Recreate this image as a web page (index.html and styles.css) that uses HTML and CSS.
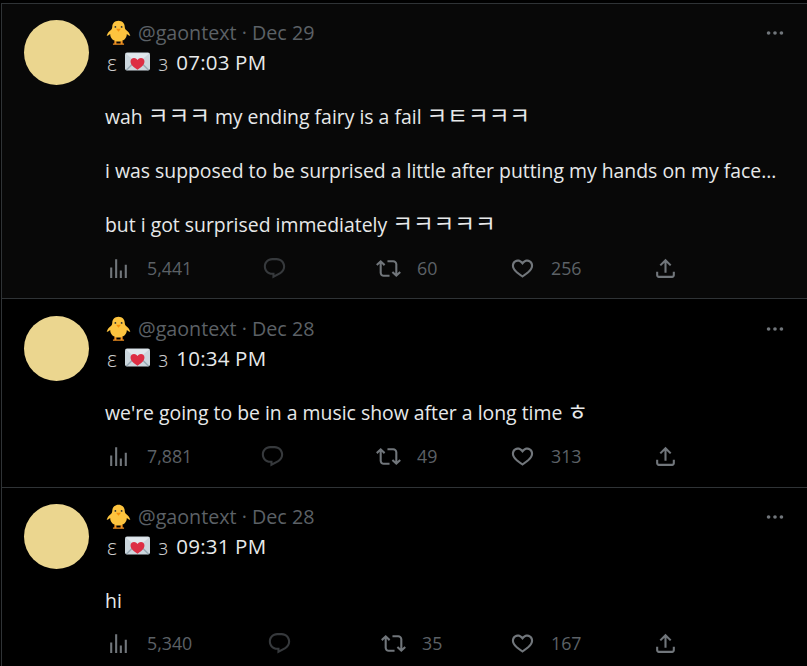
FILE: index.html
```html
<!DOCTYPE html>
<html lang="en">

<head>
    <meta charset="UTF-8">
    <meta name="viewport" content="width=device-width, initial-scale=1.0">
    <title>@gaontext</title>
    <link rel="stylesheet" href="styles.css">
</head>

<body>

    <svg class="sprites" width="0" height="0">
        <symbol id="chick" viewBox="0 0 36 36">
            <path fill="#f19020" d="M12 30h3v4h3v1.500h-8V34h2zM21 30h3v4h2v1.500h-8V34h3z"/>
            <path fill="#fdc43f" d="M18 1c5.500 0 9 4 9 9 0 1.500.5 3 1.500 4 3 2 5.500 5 6.500 9-2-.5-3.500-1.500-5-3 0 6-5 11-12 11S6 26 6 20c-1.500 1.500-3 2.500-5 3 1-4 3.500-7 6.500-9 1-1 1.500-2.500 1.500-4 0-5 3.500-9 9-9z"/>
            <path fill="#f4900c" d="M14.500 12.500h7L18 17z"/>
            <circle fill="#292f33" cx="13.500" cy="10" r="1.300"/>
            <circle fill="#292f33" cx="22.500" cy="10" r="1.300"/>
        </symbol>
        <symbol id="letter" viewBox="0 0 36 36">
            <rect fill="#ccd6dd" x="0" y="5" width="36" height="26" rx="3"/>
            <path fill="#99aab5" d="M1 30l13-13 1.500 1.500L3 31zM35 30L22 17l-1.500 1.500L33 31z"/>
            <path fill="#e1e8ed" d="M1 6l17 15L35 6z"/>
            <path fill="#dd2e44" d="M18 30c-7-5-10-8-10-12 0-3 2-5 5-5 2 0 4 1 5 3 1-2 3-3 5-3 3 0 5 2 5 5 0 4-3 7-10 12z"/>
        </symbol>
        <symbol id="views" viewBox="0 0 24 24">
            <path d="M8.750 21V3h2v18h-2zM18 21V8.500h2V21h-2zM4 21l.004-10h2L6 21H4zm9.248 0v-7h2v7h-2z"/>
        </symbol>
        <symbol id="reply" viewBox="0 0 24 24">
            <path d="M1.751 10c0-4.420 3.584-8 8.005-8h4.366c4.490 0 8.129 3.640 8.129 8.130 0 2.960-1.607 5.680-4.196 7.110l-8.054 4.460v-3.690h-.067c-4.490.100-8.183-3.510-8.183-8.010zm8.005-6c-3.317 0-6.005 2.690-6.005 6 0 3.370 2.770 6.080 6.138 6.010l.351-.010h1.761v2.300l5.087-2.810c1.951-1.080 3.163-3.130 3.163-5.360 0-3.390-2.744-6.130-6.129-6.130H9.756z"/>
        </symbol>
        <symbol id="retweet" viewBox="0 0 24 24">
            <path d="M4.500 3.880l4.432 4.140-1.364 1.460L5.500 7.550V16c0 1.100.896 2 2 2H13v2H7.500c-2.209 0-4-1.790-4-4V7.550L1.432 9.480.068 8.020 4.500 3.880zM16.500 6H11V4h5.500c2.209 0 4 1.790 4 4v8.450l2.068-1.930 1.364 1.460-4.432 4.140-4.432-4.140 1.364-1.460 2.068 1.930V8c0-1.100-.896-2-2-2z"/>
        </symbol>
        <symbol id="like" viewBox="0 0 24 24">
            <path d="M16.697 5.500c-1.222-.060-2.679.510-3.890 2.160l-.805 1.090-.806-1.090C9.984 6.010 8.526 5.440 7.304 5.500c-1.243.070-2.349.780-2.970 1.910-.611 1.120-.741 2.640.221 4.340.929 1.640 2.807 3.580 7.445 6.630 4.638-3.050 6.516-4.990 7.445-6.630.962-1.700.832-3.220.221-4.340-.620-1.130-1.727-1.840-2.969-1.910zm4.485 7.230c-1.200 2.120-3.490 4.370-8.620 7.670l-.560.360-.560-.360c-5.130-3.300-7.420-5.550-8.620-7.670-1.360-2.400-1.270-4.710-.290-6.500.970-1.770 2.720-2.880 4.660-2.980 1.590-.090 3.250.500 4.810 2.010 1.560-1.510 3.220-2.100 4.810-2.010 1.940.100 3.690 1.210 4.660 2.980.980 1.790 1.070 4.100-.290 6.500z"/>
        </symbol>
        <symbol id="share" viewBox="0 0 24 24">
            <path d="M12 2.590l5.700 5.700-1.410 1.420L13 6.410V16h-2V6.410l-3.300 3.300-1.410-1.420L12 2.590zM21 15l-.020 3.510c0 1.380-1.120 2.490-2.500 2.490H5.500C4.110 21 3 19.880 3 18.500V15h2v3.500c0 .280.220.500.500.500h12.980c.280 0 .500-.220.500-.500L19 15h2z"/>
        </symbol>
        <symbol id="more" viewBox="0 0 24 24">
            <circle cx="5" cy="12" r="2"/>
            <circle cx="12" cy="12" r="2"/>
            <circle cx="19" cy="12" r="2"/>
        </symbol>
    </svg>

    <!-- Timeline -->
    <div class="timeline">

        <article class="tweet hovered tall">
            <div class="avatar"></div>
            <div class="tweet-main">
                <div class="tweet-head">
                    <svg class="emoji"><use href="#chick"/></svg>
                    <span class="handle">@gaontext · Dec 29</span>
                    <svg class="more"><use href="#more"/></svg>
                </div>
                <div class="tweet-name">
                    <span class="bracket">ε</span>
                    <svg class="emoji"><use href="#letter"/></svg>
                    <span class="bracket">з</span>
                    <span>07:03 PM</span>
                </div>
                <p class="tweet-text">wah <span class="jamo">ㅋㅋㅋ</span> my ending fairy is a fail <span class="jamo">ㅋㅌㅋㅋㅋ</span></p>
                <p class="tweet-text">i was supposed to be surprised a little after putting my hands on my face…</p>
                <p class="tweet-text">but i got surprised immediately <span class="jamo">ㅋㅋㅋㅋㅋ</span></p>
                <div class="actions">
                    <span class="action"><svg><use href="#views"/></svg>5,441</span>
                    <span class="action dim"><svg><use href="#reply"/></svg></span>
                    <span class="action"><svg><use href="#retweet"/></svg>60</span>
                    <span class="action"><svg><use href="#like"/></svg>256</span>
                    <span class="action"><svg><use href="#share"/></svg></span>
                </div>
            </div>
        </article>

        <article class="tweet middle">
            <div class="avatar"></div>
            <div class="tweet-main">
                <div class="tweet-head">
                    <svg class="emoji"><use href="#chick"/></svg>
                    <span class="handle">@gaontext · Dec 28</span>
                    <svg class="more"><use href="#more"/></svg>
                </div>
                <div class="tweet-name">
                    <span class="bracket">ε</span>
                    <svg class="emoji"><use href="#letter"/></svg>
                    <span class="bracket">з</span>
                    <span>10:34 PM</span>
                </div>
                <p class="tweet-text">we're going to be in a music show after a long time <span class="jamo">ㅎ</span></p>
                <div class="actions">
                    <span class="action"><svg><use href="#views"/></svg>7,881</span>
                    <span class="action dim"><svg><use href="#reply"/></svg></span>
                    <span class="action"><svg><use href="#retweet"/></svg>49</span>
                    <span class="action"><svg><use href="#like"/></svg>313</span>
                    <span class="action"><svg><use href="#share"/></svg></span>
                </div>
            </div>
        </article>

        <article class="tweet last">
            <div class="avatar"></div>
            <div class="tweet-main">
                <div class="tweet-head">
                    <svg class="emoji"><use href="#chick"/></svg>
                    <span class="handle">@gaontext · Dec 28</span>
                    <svg class="more"><use href="#more"/></svg>
                </div>
                <div class="tweet-name">
                    <span class="bracket">ε</span>
                    <svg class="emoji"><use href="#letter"/></svg>
                    <span class="bracket">з</span>
                    <span>09:31 PM</span>
                </div>
                <p class="tweet-text">hi</p>
                <div class="actions">
                    <span class="action"><svg><use href="#views"/></svg>5,340</span>
                    <span class="action dim"><svg><use href="#reply"/></svg></span>
                    <span class="action"><svg><use href="#retweet"/></svg>35</span>
                    <span class="action"><svg><use href="#like"/></svg>167</span>
                    <span class="action"><svg><use href="#share"/></svg></span>
                </div>
            </div>
        </article>

    </div>

</body>

</html>
```

FILE: styles.css
```css
/* General Reset */
* {
    margin: 0;
    padding: 0;
    box-sizing: border-box;
}

body {
    font-family: 'Open Sans', 'Noto Sans CJK KR', sans-serif;
    background-color: #000;
    color: #e7e9ea;
    height: 666px;
    overflow: hidden;
}

.sprites {
    display: block;
}

.timeline {
    margin: 3px 0 0 1px;
    border-top: 1px solid #2f3336;
    border-left: 1px solid #2f3336;
}

/* Tweet */
.tweet {
    display: flex;
    gap: 16px;
    padding: 14px 21px 0 22px;
    height: 189px;
    border-bottom: 1px solid #2f3336;
}

.tweet.middle {
    padding-top: 15px;
}

.tweet.tall {
    height: 295px;
}

.tweet.hovered {
    background-color: #080808;
}

.avatar {
    width: 65px;
    height: 65px;
    margin-top: 2px;
    flex-shrink: 0;
    border-radius: 50%;
    background-color: #ebd68f;
}

.tweet-main {
    flex: 1;
    min-width: 0;
}

.tweet-head {
    display: flex;
    align-items: center;
    gap: 7px;
    height: 29px;
    padding-left: 1px;
}

.handle {
    font-size: 19.700px;
    color: #5c6166;
}

.more {
    width: 22px;
    height: 22px;
    margin-left: auto;
    fill: #71767b;
}

.emoji {
    width: 25px;
    height: 25px;
    flex-shrink: 0;
}

.tweet-name {
    display: flex;
    align-items: center;
    gap: 8px;
    height: 29px;
    padding-left: 2px;
    font-size: 20.500px;
    font-weight: 500;
    letter-spacing: .2px;
}

.bracket {
    color: #ccc;
    font-size: 22px;
    font-weight: 300;
}

.tweet-text {
    margin-top: 27px;
    height: 27px;
    font-size: 19.400px;
    line-height: 27px;
    white-space: nowrap;
}

.jamo {
    font-size: 22.500px;
    line-height: 1;
}

/* Actions - columns differ a little from tweet to tweet */
.actions {
    display: grid;
    grid-template-columns: 156px 114px 134px 143px auto;
    align-items: center;
    margin-top: 15px;
    padding-left: 1px;
    height: 30px;
}

.tweet.middle .actions {
    grid-template-columns: 154px 116px 134px 143px auto;
}

.tweet.last .actions {
    grid-template-columns: 161px 114px 129px 143px auto;
    margin-top: 14px;
}

.action {
    display: flex;
    align-items: center;
    gap: 16px;
    font-size: 17.800px;
    color: #5c6166;
}

.action svg {
    width: 25px;
    height: 25px;
    fill: #71767b;
}

.action.dim svg {
    fill: #36393c;
}
```
